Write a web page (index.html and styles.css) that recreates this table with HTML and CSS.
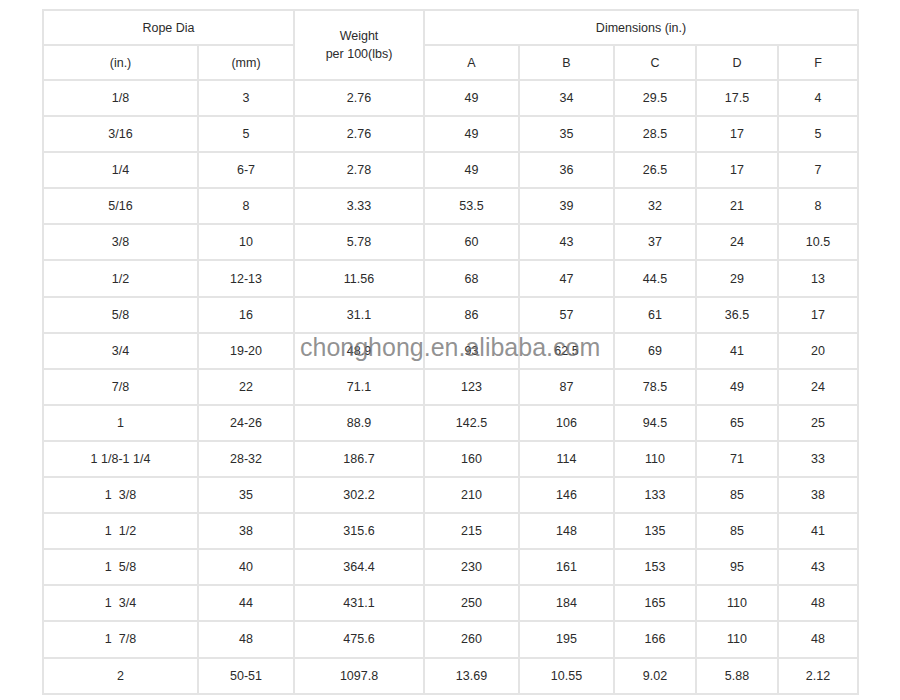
FILE: index.html
```html
<!DOCTYPE html>
<html>
<head>
<meta charset="utf-8">
<link rel="stylesheet" href="styles.css">
</head>
<body>
<div class="page">
  <table class="spec">
    <colgroup>
      <col class="c1"><col class="c2"><col class="c3"><col class="c4"><col class="c5"><col class="c6"><col class="c7"><col class="c8">
    </colgroup>
    <thead>
      <tr class="hrow">
        <th colspan="2">Rope Dia</th>
        <th rowspan="2" class="weight">Weight<br>per 100(lbs)</th>
        <th colspan="5">Dimensions (in.)</th>
      </tr>
      <tr class="hrow">
        <th>(in.)</th><th>(mm)</th><th>A</th><th>B</th><th>C</th><th>D</th><th>F</th>
      </tr>
    </thead>
    <tbody>
      <tr><td>1/8</td><td>3</td><td>2.76</td><td>49</td><td>34</td><td>29.5</td><td>17.5</td><td>4</td></tr>
      <tr><td>3/16</td><td>5</td><td>2.76</td><td>49</td><td>35</td><td>28.5</td><td>17</td><td>5</td></tr>
      <tr><td>1/4</td><td>6-7</td><td>2.78</td><td>49</td><td>36</td><td>26.5</td><td>17</td><td>7</td></tr>
      <tr><td>5/16</td><td>8</td><td>3.33</td><td>53.5</td><td>39</td><td>32</td><td>21</td><td>8</td></tr>
      <tr><td>3/8</td><td>10</td><td>5.78</td><td>60</td><td>43</td><td>37</td><td>24</td><td>10.5</td></tr>
      <tr><td>1/2</td><td>12-13</td><td>11.56</td><td>68</td><td>47</td><td>44.5</td><td>29</td><td>13</td></tr>
      <tr><td>5/8</td><td>16</td><td>31.1</td><td>86</td><td>57</td><td>61</td><td>36.5</td><td>17</td></tr>
      <tr><td>3/4</td><td>19-20</td><td>48.9</td><td>93</td><td>62.5</td><td>69</td><td>41</td><td>20</td></tr>
      <tr><td>7/8</td><td>22</td><td>71.1</td><td>123</td><td>87</td><td>78.5</td><td>49</td><td>24</td></tr>
      <tr><td>1</td><td>24-26</td><td>88.9</td><td>142.5</td><td>106</td><td>94.5</td><td>65</td><td>25</td></tr>
      <tr><td>1 1/8-1 1/4</td><td>28-32</td><td>186.7</td><td>160</td><td>114</td><td>110</td><td>71</td><td>33</td></tr>
      <tr><td>1&nbsp; 3/8</td><td>35</td><td>302.2</td><td>210</td><td>146</td><td>133</td><td>85</td><td>38</td></tr>
      <tr><td>1&nbsp; 1/2</td><td>38</td><td>315.6</td><td>215</td><td>148</td><td>135</td><td>85</td><td>41</td></tr>
      <tr><td>1&nbsp; 5/8</td><td>40</td><td>364.4</td><td>230</td><td>161</td><td>153</td><td>95</td><td>43</td></tr>
      <tr><td>1&nbsp; 3/4</td><td>44</td><td>431.1</td><td>250</td><td>184</td><td>165</td><td>110</td><td>48</td></tr>
      <tr><td>1&nbsp; 7/8</td><td>48</td><td>475.6</td><td>260</td><td>195</td><td>166</td><td>110</td><td>48</td></tr>
      <tr><td>2</td><td>50-51</td><td>1097.8</td><td>13.69</td><td>10.55</td><td>9.02</td><td>5.88</td><td>2.12</td></tr>
    </tbody>
  </table>
  <div class="watermark">chonghong.en.alibaba.com</div>
</div>
</body>
</html>
```

FILE: styles.css
```css
html, body {
  margin: 0;
  padding: 0;
  background: #ffffff;
}

.page {
  position: relative;
  width: 900px;
  height: 700px;
  padding: 9px 0 0 42px;
  box-sizing: border-box;
}

.spec {
  border-collapse: collapse;
  table-layout: fixed;
  width: 815px;
  font-family: "Liberation Sans", Arial, sans-serif;
  font-size: 12.5px;
  color: #2b2b2b;
}

.c1 { width: 155px; }
.c2 { width: 96px; }
.c3 { width: 130px; }
.c4 { width: 95px; }
.c5 { width: 95px; }
.c6 { width: 82px; }
.c7 { width: 82px; }
.c8 { width: 80px; }

.spec th,
.spec td {
  border: 2px solid #e4e4e4;
  padding: 0;
  text-align: center;
  vertical-align: middle;
  font-weight: normal;
  white-space: nowrap;
}

.spec .hrow th {
  height: 33px;
}

.spec th.weight {
  line-height: 18px;
}

.spec tbody td {
  height: 34.1px;
}

.watermark {
  position: absolute;
  left: 300px;
  top: 333px;
  font-family: "Liberation Sans", Arial, sans-serif;
  font-size: 25px;
  color: rgba(110, 110, 110, 0.75);
  white-space: nowrap;
  pointer-events: none;
}
```
